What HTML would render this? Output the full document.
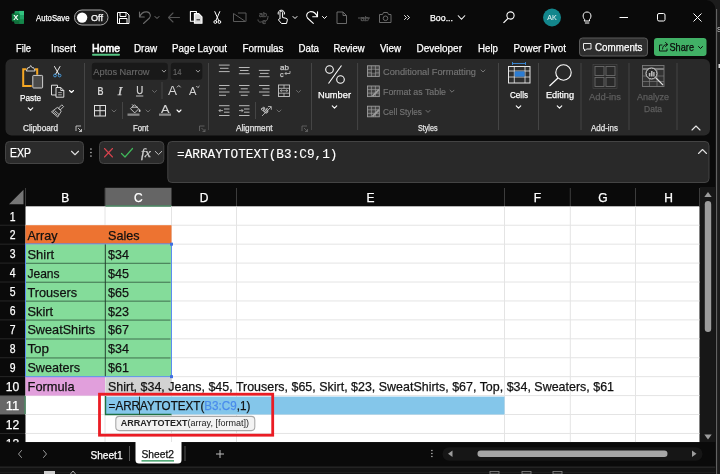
<!DOCTYPE html>
<html><head><meta charset="utf-8"><title>Excel</title>
<style>
html,body{margin:0;padding:0;background:#0a0a0a;overflow:hidden}
svg{display:block;will-change:transform;font-family:"Liberation Sans",sans-serif}
</style></head><body>
<svg width="720" height="474" viewBox="0 0 720 474">
<rect x="0" y="0" width="720" height="474" fill="#0a0a0a" />
<path d="M705 0 H720 V474 H715.3 V9 A9 9 0 0 0 706.3 0 Z" stroke="none" stroke-width="0" fill="#1c1c1c" />
<line x1="716.6" y1="9" x2="716.6" y2="474" stroke="#6a6a6a" stroke-width="1" />
<text x="717" y="31.5" font-size="7" fill="#ddd" >S</text>
<rect x="718.5" y="64" width="1.5" height="4" fill="#ddd" />
<rect x="14.5" y="10.9" width="9.5" height="12.8" fill="#1d9a5e" rx="1.2" />
<rect x="19.3" y="10.9" width="4.7" height="4.3" fill="#33c481" />
<rect x="19.3" y="15.2" width="4.7" height="4.2" fill="#21a366" />
<rect x="19.3" y="19.4" width="4.7" height="4.3" fill="#15874a" />
<rect x="14.5" y="19.4" width="4.8" height="4.3" fill="#126b3a" />
<rect x="11.8" y="13.5" width="8" height="8" fill="#107c41" rx="0.8" />
<text x="13.2" y="20.2" font-size="7.2" fill="#fff" textLength="5.2" lengthAdjust="spacingAndGlyphs" font-weight="bold" >X</text>
<text x="36" y="20.6" font-size="9" fill="#fff" stroke="#fff" stroke-width="0.25" textLength="33.5" lengthAdjust="spacingAndGlyphs" >AutoSave</text>
<rect x="74.5" y="10" width="33.5" height="15" fill="#1c1c1c" rx="7.5" stroke="#a8a8a8" stroke-width="1" />
<circle cx="82.1" cy="17.6" r="5.2" fill="#fff"/>
<text x="91" y="20.7" font-size="9" fill="#fff" stroke="#fff" stroke-width="0.25" textLength="12" lengthAdjust="spacingAndGlyphs" >Off</text>
<path d="M117.5 12.5 h9 l2.5 2.5 v8.5 h-11.5 z M120 12.5 v4 h6 v-4 M119.5 23.5 v-5 h7.5 v5" stroke="#fff" stroke-width="1" fill="none" stroke-linejoin="round"/>
<path d="M139.5 12 V17 H144.3 M139.5 17 C141 13.5 144 11.6 147 11.9 C150.3 12.3 151.2 16 149.5 18 L143.5 23.5" stroke="#6a6a6a" stroke-width="1.1" fill="none" stroke-linecap="round" stroke-linejoin="round"/>
<path d="M155.0 16.5 L157 18.5 L159.0 16.5" stroke="#7a7a7a" stroke-width="1" fill="none" stroke-linecap="round" stroke-linejoin="round"/>
<path d="M179.5 17.5 h-11 M173 13 l-4.5 4.5 l4.5 4.5" stroke="#555" stroke-width="1.1" fill="none" stroke-linecap="round" stroke-linejoin="round"/>
<path d="M194 21.3 h-3.6 v-9.8 h6 v2" stroke="#fff" stroke-width="1.1" fill="none" stroke-linejoin="round"/>
<path d="M194.4 13.6 h4.4 l3.2 3.2 v6.4 h-7.6 z" stroke="#fff" stroke-width="1.1" fill="#d8d8d8" stroke-linejoin="round"/>
<line x1="196.5" y1="19.8" x2="200" y2="19.8" stroke="#222" stroke-width="1" />
<path d="M214.8 11.6 l4 9.2 M219.8 11.6 l-4 9.2" stroke="#fff" stroke-width="1" fill="none" stroke-linecap="round"/>
<circle cx="215.3" cy="22" r="1.4" fill="none" stroke="#fff"/><circle cx="219.4" cy="22" r="1.4" fill="none" stroke="#fff"/>
<path d="M233.5 21.5 v-8 l12 8 z M238 13 h8 v8.5" stroke="#5a5a5a" stroke-width="1" fill="none" stroke-linejoin="round"/>
<text x="259" y="17" font-size="7" fill="#5a5a5a" stroke="#5a5a5a" stroke-width="0.25" textLength="8" lengthAdjust="spacingAndGlyphs" >ab</text>
<path d="M258 19.5 c0 3 3 3 4 2 M268 16 c0 5 -3 6 -5 6" stroke="#5a5a5a" stroke-width="1" fill="none" />
<text x="262" y="23.5" font-size="7" fill="#5a5a5a" stroke="#5a5a5a" stroke-width="0.25" textLength="4" lengthAdjust="spacingAndGlyphs" >c</text>
<path d="M280 19 v-6.5 a1.3 1.3 0 0 1 2.6 0 v5 l3.5 0.8 a1.5 1.5 0 0 1 1.2 1.8 l-0.8 3.4 h-5 l-3 -3.5 a1 1 0 0 1 1.5 -1 z" stroke="#fff" stroke-width="1" fill="none" stroke-linejoin="round"/>
<path d="M278.3 14.5 a3.2 3.2 0 1 1 6 0" stroke="#fff" stroke-width="1" fill="none" />
<path d="M293.0 16.5 L295 18.5 L297.0 16.5" stroke="#fff" stroke-width="1" fill="none" stroke-linecap="round" stroke-linejoin="round"/>
<path d="M317.5 11.7 V16.8 H312.7 M317.5 16.8 C316 13.5 313 11.4 310 11.7 C306.7 12.1 305.8 16 307.5 18 L313.3 23.3" stroke="#fff" stroke-width="1.1" fill="none" stroke-linecap="round" stroke-linejoin="round"/>
<path d="M322.5 16.5 L324.5 18.5 L326.5 16.5" stroke="#fff" stroke-width="1" fill="none" stroke-linecap="round" stroke-linejoin="round"/>
<path d="M337 12 h6 l3.5 3.5 v8 h-9.5 z M343 12 v3.5 h3.5" stroke="#6a6a6a" stroke-width="1" fill="none" stroke-linejoin="round"/>
<text x="360.5" y="20.5" font-size="8" fill="#5a5a5a" stroke="#5a5a5a" stroke-width="0.25" textLength="8.5" lengthAdjust="spacingAndGlyphs" >ab</text>
<line x1="358" y1="18" x2="370" y2="18" stroke="#5a5a5a" stroke-width="1" />
<path d="M379.5 14.5 h3 l1 -2 h4 l1 2 h2.5 v8 h-11.5 z" stroke="#6a6a6a" stroke-width="1" fill="none" stroke-linejoin="round"/>
<circle cx="385.5" cy="18.3" r="2.3" fill="none" stroke="#6a6a6a"/>
<path d="M404.5 15.5 l2 2 l-2 2 M407.5 15.5 l2 2 l-2 2" stroke="#fff" stroke-width="0.9" fill="none" stroke-linecap="round" stroke-linejoin="round"/>
<text x="430" y="20.8" font-size="9" fill="#fff" stroke="#fff" stroke-width="0.25" textLength="23" lengthAdjust="spacingAndGlyphs" >Boo...</text>
<path d="M458.25 15.75 L461.5 19.25 L464.75 15.75" stroke="#fff" stroke-width="1.1" fill="none" stroke-linecap="round" stroke-linejoin="round"/>
<circle cx="510.5" cy="15.5" r="3.6" fill="none" stroke="#fff" stroke-width="1.1"/>
<line x1="508" y1="18.3" x2="503.5" y2="22.8" stroke="#fff" stroke-width="1.2" />
<circle cx="552" cy="17.5" r="9" fill="#13868c"/>
<text x="547.3" y="20.2" font-size="7.6" fill="#e4f2f2" stroke="#e4f2f2" stroke-width="0.05" textLength="9.5" lengthAdjust="spacingAndGlyphs" >AK</text>
<path d="M584.5 19.5 c-2.5 -2.5 -1.8 -7.5 2.5 -7.5 c4.3 0 5 5 2.5 7.5 v1.5 h-5 z M585.3 23 h3.6" stroke="#fff" stroke-width="1" fill="none" stroke-linejoin="round" stroke-linecap="round"/>
<line x1="619.5" y1="17.5" x2="628" y2="17.5" stroke="#fff" stroke-width="1" />
<rect x="657.5" y="13.5" width="7.5" height="7.5" fill="none" rx="1.5" stroke="#fff" stroke-width="1" />
<path d="M693.5 13.5 l8 8 M701.5 13.5 l-8 8" stroke="#fff" stroke-width="1" fill="none" />
<text x="16" y="51.6" font-size="10.1" fill="#fff" stroke="#fff" stroke-width="0.25" textLength="15" lengthAdjust="spacingAndGlyphs" >File</text>
<text x="51" y="51.6" font-size="10.1" fill="#fff" stroke="#fff" stroke-width="0.25" textLength="25" lengthAdjust="spacingAndGlyphs" >Insert</text>
<text x="134" y="51.6" font-size="10.1" fill="#fff" stroke="#fff" stroke-width="0.25" textLength="23" lengthAdjust="spacingAndGlyphs" >Draw</text>
<text x="172" y="51.6" font-size="10.1" fill="#fff" stroke="#fff" stroke-width="0.25" textLength="55" lengthAdjust="spacingAndGlyphs" >Page Layout</text>
<text x="242.5" y="51.6" font-size="10.1" fill="#fff" stroke="#fff" stroke-width="0.25" textLength="41.0" lengthAdjust="spacingAndGlyphs" >Formulas</text>
<text x="298.5" y="51.6" font-size="10.1" fill="#fff" stroke="#fff" stroke-width="0.25" textLength="20.5" lengthAdjust="spacingAndGlyphs" >Data</text>
<text x="333.5" y="51.6" font-size="10.1" fill="#fff" stroke="#fff" stroke-width="0.25" textLength="31.0" lengthAdjust="spacingAndGlyphs" >Review</text>
<text x="380" y="51.6" font-size="10.1" fill="#fff" stroke="#fff" stroke-width="0.25" textLength="21" lengthAdjust="spacingAndGlyphs" >View</text>
<text x="416.5" y="51.6" font-size="10.1" fill="#fff" stroke="#fff" stroke-width="0.25" textLength="45.5" lengthAdjust="spacingAndGlyphs" >Developer</text>
<text x="478" y="51.6" font-size="10.1" fill="#fff" stroke="#fff" stroke-width="0.25" textLength="20" lengthAdjust="spacingAndGlyphs" >Help</text>
<text x="513.5" y="51.6" font-size="10.1" fill="#fff" stroke="#fff" stroke-width="0.25" textLength="52.5" lengthAdjust="spacingAndGlyphs" >Power Pivot</text>
<text x="92" y="51.6" font-size="10.1" fill="#fff" stroke="#fff" stroke-width="0.55" textLength="28" lengthAdjust="spacingAndGlyphs" >Home</text>
<rect x="92" y="53.8" width="28" height="1.9" fill="#55c483" rx="0.9" />
<rect x="579.5" y="38" width="68" height="18" fill="#2e2e2e" rx="3" stroke="#5a5a5a" stroke-width="1" />
<path d="M583.5 43.5 h7.5 v5.5 h-4.5 l-2 2 v-2 h-1 z" stroke="#fff" stroke-width="0.9" fill="none" stroke-linejoin="round"/>
<text x="595" y="51.1" font-size="10.1" fill="#fff" stroke="#fff" stroke-width="0.25" textLength="47.5" lengthAdjust="spacingAndGlyphs" >Comments</text>
<rect x="654" y="38" width="52.5" height="18" fill="#41b166" rx="3" />
<path d="M662 45 h-2.5 v6 h7.5 v-2 M662.5 49 c0 -3 2 -4.5 4.5 -4.5 M665.5 42.5 l2.3 2 l-2.3 2" stroke="#0a0a0a" stroke-width="0.9" fill="none" stroke-linejoin="round" stroke-linecap="round"/>
<text x="669.5" y="51.1" font-size="10.1" fill="#0a0a0a" stroke="#0a0a0a" stroke-width="0.25" textLength="24.5" lengthAdjust="spacingAndGlyphs" >Share</text>
<path d="M698.5 46.5 L700.5 48.5 L702.5 46.5" stroke="#0a0a0a" stroke-width="1" fill="none" stroke-linecap="round" stroke-linejoin="round"/>
<rect x="5.5" y="59" width="704.5" height="76.5" fill="#292929" rx="6" />
<line x1="84.5" y1="63" x2="84.5" y2="130" stroke="#454545" stroke-width="1" />
<line x1="208.5" y1="63" x2="208.5" y2="130" stroke="#454545" stroke-width="1" />
<line x1="311.5" y1="63" x2="311.5" y2="130" stroke="#454545" stroke-width="1" />
<line x1="357.6" y1="63" x2="357.6" y2="130" stroke="#454545" stroke-width="1" />
<line x1="498.5" y1="63" x2="498.5" y2="130" stroke="#454545" stroke-width="1" />
<line x1="538.5" y1="63" x2="538.5" y2="130" stroke="#454545" stroke-width="1" />
<line x1="581" y1="63" x2="581" y2="130" stroke="#454545" stroke-width="1" />
<line x1="629" y1="63" x2="629" y2="130" stroke="#454545" stroke-width="1" />
<line x1="677" y1="63" x2="677" y2="130" stroke="#454545" stroke-width="1" />
<text x="23" y="130.5" font-size="8.7" fill="#e6e6e6" stroke="#e6e6e6" stroke-width="0.25" textLength="35" lengthAdjust="spacingAndGlyphs" >Clipboard</text>
<text x="133" y="130.5" font-size="8.7" fill="#e6e6e6" stroke="#e6e6e6" stroke-width="0.25" textLength="15.5" lengthAdjust="spacingAndGlyphs" >Font</text>
<text x="236" y="130.5" font-size="8.7" fill="#e6e6e6" stroke="#e6e6e6" stroke-width="0.25" textLength="36.5" lengthAdjust="spacingAndGlyphs" >Alignment</text>
<text x="418" y="130.5" font-size="8.7" fill="#e6e6e6" stroke="#e6e6e6" stroke-width="0.25" textLength="19.5" lengthAdjust="spacingAndGlyphs" >Styles</text>
<text x="591" y="130.5" font-size="8.7" fill="#e6e6e6" stroke="#e6e6e6" stroke-width="0.25" textLength="27" lengthAdjust="spacingAndGlyphs" >Add-ins</text>
<path d="M76 131 v-5 h5 M78 128 l3.5 3.5 M81.5 129 v2.5 h-2.5" stroke="#e0e0e0" stroke-width="0.8" fill="none" />
<path d="M199.5 131 v-5 h5 M201.5 128 l3.5 3.5 M205.0 129 v2.5 h-2.5" stroke="#6a6a6a" stroke-width="0.8" fill="none" />
<path d="M302 131 v-5 h5 M304 128 l3.5 3.5 M307.5 129 v2.5 h-2.5" stroke="#6a6a6a" stroke-width="0.8" fill="none" />
<path d="M692 130 l4 -4 l4 4" stroke="#e6e6e6" stroke-width="1.1" fill="none" stroke-linecap="round" stroke-linejoin="round"/>
<path d="M26.5 69.2 h-3.3 v16.8 h8.5 M35 69.2 h2.2 v5.5" stroke="#f5a724" stroke-width="2" fill="none" stroke-linejoin="miter"/>
<path d="M26.3 71 l1.5 -3.3 h1.5 l1.4 -2.2 l1.4 2.2 h1.5 l1.5 3.3 z" stroke="#e0e0e0" stroke-width="0.9" fill="#292929" stroke-linejoin="round"/>
<rect x="32.8" y="75.4" width="9.8" height="12.6" fill="#4a4a4a" rx="0.8" stroke="#d0d0d0" stroke-width="1" />
<text x="20" y="100.5" font-size="9.6" fill="#fff" stroke="#fff" stroke-width="0.25" textLength="21" lengthAdjust="spacingAndGlyphs" >Paste</text>
<path d="M28.25 107.9 L30.5 110.1 L32.75 107.9" stroke="#fff" stroke-width="1.1" fill="none" stroke-linecap="round" stroke-linejoin="round"/>
<path d="M54.5 66.5 l4.5 8 M60 66.5 l-4.5 8" stroke="#fff" stroke-width="0.9" fill="none" stroke-linecap="round"/>
<circle cx="55" cy="75.5" r="1.4" fill="none" stroke="#4aa3e8" stroke-width="0.9"/><circle cx="59.6" cy="75.5" r="1.4" fill="none" stroke="#4aa3e8" stroke-width="0.9"/>
<path d="M56 95 h-4.5 v-9.8 h6 v2 M56 87.5 h4.8 l3 3 v6.7 h-7.8 z M60.8 87.5 v3 h3" stroke="#f0f0f0" stroke-width="0.9" fill="none" stroke-linejoin="round"/>
<line x1="58.2" y1="92.6" x2="61.8" y2="92.6" stroke="#ddd" stroke-width="0.7" />
<line x1="58.2" y1="94.8" x2="61.8" y2="94.8" stroke="#ddd" stroke-width="0.7" />
<path d="M69.5 90.5 L71.5 92.5 L73.5 90.5" stroke="#fff" stroke-width="1.1" fill="none" stroke-linecap="round" stroke-linejoin="round"/>
<path d="M61.8 104.8 l1.8 1.8 l-3.3 3.3 l-1.8 -1.8 z M57.5 107.3 l3.8 3.8 l-3.6 6 l-6.2 -5.3 z M54.5 110.5 l4.5 4 M53 111.3 l4.5 4.2" stroke="#e0e0e0" stroke-width="0.8" fill="none" stroke-linejoin="round"/>
<rect x="91.8" y="62.7" width="76" height="17" fill="#191919" rx="3" />
<text x="93.3" y="74.8" font-size="9.8" fill="#686868" stroke="#686868" stroke-width="0.15" textLength="56.2" lengthAdjust="spacingAndGlyphs" >Aptos Narrow</text>
<path d="M162.2 70.25 L164 72.15 L165.8 70.25" stroke="#9a9a9a" stroke-width="1" fill="none" stroke-linecap="round" stroke-linejoin="round"/>
<rect x="170.8" y="62.7" width="31.5" height="17" fill="#191919" rx="3" />
<text x="173" y="74.8" font-size="9.8" fill="#686868" stroke="#686868" stroke-width="0.15" textLength="8.5" lengthAdjust="spacingAndGlyphs" >14</text>
<path d="M196.2 70.25 L198 72.15 L199.8 70.25" stroke="#9a9a9a" stroke-width="1" fill="none" stroke-linecap="round" stroke-linejoin="round"/>
<text x="97.6" y="94.5" font-size="11" fill="#d4d4d4" textLength="6" lengthAdjust="spacingAndGlyphs" font-weight="bold" >B</text>
<text x="117.8" y="94.5" font-size="11.5" fill="#d4d4d4" stroke="#d4d4d4" stroke-width="0.25" textLength="4.6" lengthAdjust="spacingAndGlyphs" font-family='"Liberation Serif", serif' font-style="italic" >I</text>
<text x="136.2" y="94.2" font-size="10.6" fill="#d4d4d4" stroke="#d4d4d4" stroke-width="0.25" textLength="7" lengthAdjust="spacingAndGlyphs" >U</text>
<line x1="136" y1="96" x2="143.3" y2="96" stroke="#d4d4d4" stroke-width="0.9" />
<path d="M152.5 90.5 L154.5 92.5 L156.5 90.5" stroke="#6a6a6a" stroke-width="1" fill="none" stroke-linecap="round" stroke-linejoin="round"/>
<line x1="162" y1="82" x2="162" y2="99" stroke="#454545" stroke-width="1" />
<text x="168" y="95" font-size="13" fill="#d4d4d4" textLength="9" lengthAdjust="spacingAndGlyphs" >A</text>
<path d="M177 87.3 l1.8 -1.8 l1.8 1.8" stroke="#d4d4d4" stroke-width="0.9" fill="none" />
<text x="189" y="95" font-size="11" fill="#d4d4d4" textLength="7.5" lengthAdjust="spacingAndGlyphs" >A</text>
<path d="M196.3 86 l1.6 1.6 l1.6 -1.6" stroke="#d4d4d4" stroke-width="0.9" fill="none" />
<rect x="94.5" y="105.5" width="11" height="10.5" fill="none" stroke="#e0e0e0" stroke-width="1" />
<line x1="100" y1="105.5" x2="100" y2="116" stroke="#e0e0e0" stroke-width="1" />
<line x1="94.5" y1="110.7" x2="105.5" y2="110.7" stroke="#e0e0e0" stroke-width="1" />
<path d="M112.0 110.0 L114 112.0 L116.0 110.0" stroke="#6a6a6a" stroke-width="1" fill="none" stroke-linecap="round" stroke-linejoin="round"/>
<line x1="122.5" y1="102" x2="122.5" y2="119" stroke="#454545" stroke-width="1" />
<path d="M130.5 108.7 l4 -4 l4.2 4.2 l-4 4 z M132 107.2 h6 M133.3 105.8 l-1.2 -1.4" stroke="#d4d4d4" stroke-width="0.9" fill="none" stroke-linejoin="round"/>
<path d="M139.6 108.8 c1 1.6 1.3 2.3 0.6 3 c-0.7 0.5 -1.6 0 -1.5 -1 z" stroke="#d4d4d4" stroke-width="0" fill="#d4d4d4" />
<rect x="127.5" y="113.5" width="12" height="2.3" fill="#8a8a8a" />
<path d="M146.0 110.0 L148 112.0 L150.0 110.0" stroke="#6a6a6a" stroke-width="1" fill="none" stroke-linecap="round" stroke-linejoin="round"/>
<text x="161" y="113.2" font-size="10.8" fill="#d4d4d4" stroke="#d4d4d4" stroke-width="0.1" textLength="8.5" lengthAdjust="spacingAndGlyphs" >A</text>
<rect x="159" y="113.5" width="12" height="2.3" fill="#8a8a8a" />
<path d="M177.0 110.0 L179 112.0 L181.0 110.0" stroke="#fff" stroke-width="1.1" fill="none" stroke-linecap="round" stroke-linejoin="round"/>
<line x1="218.85" y1="65.1" x2="229.65" y2="65.1" stroke="#c8c8c8" stroke-width="0.9" />
<line x1="219.95" y1="68.3" x2="228.54999999999998" y2="68.3" stroke="#c8c8c8" stroke-width="0.9" />
<line x1="218.85" y1="71.6" x2="229.65" y2="71.6" stroke="#c8c8c8" stroke-width="0.9" />
<line x1="238.85" y1="67.5" x2="249.65" y2="67.5" stroke="#c8c8c8" stroke-width="0.9" />
<line x1="239.95" y1="70.5" x2="248.54999999999998" y2="70.5" stroke="#c8c8c8" stroke-width="0.9" />
<line x1="238.85" y1="73.7" x2="249.65" y2="73.7" stroke="#c8c8c8" stroke-width="0.9" />
<line x1="258.85" y1="70.4" x2="269.65000000000003" y2="70.4" stroke="#c8c8c8" stroke-width="0.9" />
<line x1="259.95" y1="73.4" x2="268.55" y2="73.4" stroke="#c8c8c8" stroke-width="0.9" />
<line x1="258.85" y1="76.7" x2="269.65000000000003" y2="76.7" stroke="#c8c8c8" stroke-width="0.9" />
<text x="280" y="69.5" font-size="7" fill="#c8c8c8" stroke="#c8c8c8" stroke-width="0.25" textLength="9" lengthAdjust="spacingAndGlyphs" >ab</text>
<text x="280" y="76.5" font-size="7" fill="#c8c8c8" stroke="#c8c8c8" stroke-width="0.25" textLength="3.6" lengthAdjust="spacingAndGlyphs" >c</text>
<path d="M290 71 v2.5 h-5 M286.5 72 l-1.5 1.5 l1.5 1.5" stroke="#c8c8c8" stroke-width="0.8" fill="none" />
<line x1="219" y1="85.5" x2="229.5" y2="85.5" stroke="#c8c8c8" stroke-width="0.9" />
<line x1="219" y1="88.8" x2="226" y2="88.8" stroke="#c8c8c8" stroke-width="0.9" />
<line x1="219" y1="92" x2="229.5" y2="92" stroke="#c8c8c8" stroke-width="0.9" />
<line x1="219" y1="95.3" x2="226" y2="95.3" stroke="#c8c8c8" stroke-width="0.9" />
<line x1="239.0" y1="85.5" x2="249.5" y2="85.5" stroke="#c8c8c8" stroke-width="0.9" />
<line x1="240.75" y1="88.8" x2="247.75" y2="88.8" stroke="#c8c8c8" stroke-width="0.9" />
<line x1="239.0" y1="92" x2="249.5" y2="92" stroke="#c8c8c8" stroke-width="0.9" />
<line x1="240.75" y1="95.3" x2="247.75" y2="95.3" stroke="#c8c8c8" stroke-width="0.9" />
<line x1="259.0" y1="85.5" x2="269.5" y2="85.5" stroke="#c8c8c8" stroke-width="0.9" />
<line x1="262.5" y1="88.8" x2="269.5" y2="88.8" stroke="#c8c8c8" stroke-width="0.9" />
<line x1="259.0" y1="92" x2="269.5" y2="92" stroke="#c8c8c8" stroke-width="0.9" />
<line x1="262.5" y1="95.3" x2="269.5" y2="95.3" stroke="#c8c8c8" stroke-width="0.9" />
<rect x="278.5" y="85" width="11" height="11.5" fill="none" stroke="#c8c8c8" stroke-width="0.9" />
<line x1="278.5" y1="88.3" x2="289.5" y2="88.3" stroke="#c8c8c8" stroke-width="0.8" />
<line x1="278.5" y1="93.2" x2="289.5" y2="93.2" stroke="#c8c8c8" stroke-width="0.8" />
<line x1="284" y1="85" x2="284" y2="88.3" stroke="#c8c8c8" stroke-width="0.8" />
<line x1="284" y1="93.2" x2="284" y2="96.5" stroke="#c8c8c8" stroke-width="0.8" />
<path d="M280.3 90.7 h7.4 M281.8 89.5 l-1.5 1.2 l1.5 1.2 M286.2 89.5 l1.5 1.2 l-1.5 1.2" stroke="#c8c8c8" stroke-width="0.7" fill="none" />
<path d="M296.5 90.5 L298.5 92.5 L300.5 90.5" stroke="#6a6a6a" stroke-width="1" fill="none" stroke-linecap="round" stroke-linejoin="round"/>
<line x1="219.0" y1="105.7" x2="229.5" y2="105.7" stroke="#c8c8c8" stroke-width="0.9" />
<line x1="224.0" y1="109" x2="229.5" y2="109" stroke="#c8c8c8" stroke-width="0.9" />
<line x1="224.0" y1="112.2" x2="229.5" y2="112.2" stroke="#c8c8c8" stroke-width="0.9" />
<line x1="219.0" y1="115.5" x2="229.5" y2="115.5" stroke="#c8c8c8" stroke-width="0.9" />
<path d="M223 110.6 h-4 M220.5 109.1 l-1.5 1.5 l1.5 1.5" stroke="#c8c8c8" stroke-width="0.8" fill="none" />
<line x1="239.0" y1="105.7" x2="249.5" y2="105.7" stroke="#c8c8c8" stroke-width="0.9" />
<line x1="244.0" y1="109" x2="249.5" y2="109" stroke="#c8c8c8" stroke-width="0.9" />
<line x1="244.0" y1="112.2" x2="249.5" y2="112.2" stroke="#c8c8c8" stroke-width="0.9" />
<line x1="239.0" y1="115.5" x2="249.5" y2="115.5" stroke="#c8c8c8" stroke-width="0.9" />
<path d="M239 110.6 h4 M241.5 109.1 l1.5 1.5 l-1.5 1.5" stroke="#c8c8c8" stroke-width="0.8" fill="none" />
<line x1="255.5" y1="102" x2="255.5" y2="119" stroke="#454545" stroke-width="1" />
<text x="0" y="0" font-size="7" fill="#c8c8c8" stroke="#c8c8c8" stroke-width="0.25" textLength="8" lengthAdjust="spacingAndGlyphs" transform="translate(260.5,109) rotate(40)">ab</text>
<path d="M262 116 l9 -9 M268 106.5 h3.3 v3.3" stroke="#c8c8c8" stroke-width="0.8" fill="none" />
<path d="M277.0 110.0 L279 112.0 L281.0 110.0" stroke="#6a6a6a" stroke-width="1" fill="none" stroke-linecap="round" stroke-linejoin="round"/>
<circle cx="329.5" cy="69.5" r="3.8" fill="none" stroke="#fff" stroke-width="1.1"/><circle cx="340.5" cy="79.5" r="3.8" fill="none" stroke="#fff" stroke-width="1.1"/>
<line x1="341.5" y1="65.5" x2="328.5" y2="83.5" stroke="#fff" stroke-width="1.1" />
<text x="318" y="98" font-size="9.6" fill="#fff" stroke="#fff" stroke-width="0.25" textLength="33" lengthAdjust="spacingAndGlyphs" >Number</text>
<path d="M332.25 105.9 L334.5 108.1 L336.75 105.9" stroke="#fff" stroke-width="1.1" fill="none" stroke-linecap="round" stroke-linejoin="round"/>
<rect x="367.5" y="65.8" width="11.8" height="10.6" fill="#444" stroke="#9c9c9c" stroke-width="0.9" />
<line x1="367.5" y1="69.4" x2="379.3" y2="69.4" stroke="#9c9c9c" stroke-width="0.7" />
<line x1="367.5" y1="72.9" x2="379.3" y2="72.9" stroke="#9c9c9c" stroke-width="0.7" />
<line x1="371.4" y1="65.8" x2="371.4" y2="76.4" stroke="#9c9c9c" stroke-width="0.7" />
<line x1="375.4" y1="65.8" x2="375.4" y2="76.4" stroke="#9c9c9c" stroke-width="0.7" />
<rect x="371.8" y="69.7" width="3.3" height="3" fill="#2a2a2a" />
<text x="383" y="74.7" font-size="9.6" fill="#757575" stroke="#757575" stroke-width="0.15" textLength="93" lengthAdjust="spacingAndGlyphs" >Conditional Formatting</text>
<path d="M481.0 70.0 L483 72.0 L485.0 70.0" stroke="#757575" stroke-width="1" fill="none" stroke-linecap="round" stroke-linejoin="round"/>
<rect x="367.5" y="86.0" width="11.8" height="10.6" fill="#444" stroke="#9c9c9c" stroke-width="0.9" />
<line x1="367.5" y1="89.60000000000001" x2="379.3" y2="89.60000000000001" stroke="#9c9c9c" stroke-width="0.7" />
<line x1="367.5" y1="93.10000000000001" x2="379.3" y2="93.10000000000001" stroke="#9c9c9c" stroke-width="0.7" />
<line x1="371.4" y1="86.0" x2="371.4" y2="96.60000000000001" stroke="#9c9c9c" stroke-width="0.7" />
<line x1="375.4" y1="86.0" x2="375.4" y2="96.60000000000001" stroke="#9c9c9c" stroke-width="0.7" />
<path d="M372.5 96.2 l6.5 -6.5" stroke="#9c9c9c" stroke-width="1.8" fill="none" />
<text x="383" y="94.9" font-size="9.6" fill="#757575" stroke="#757575" stroke-width="0.15" textLength="63" lengthAdjust="spacingAndGlyphs" >Format as Table</text>
<path d="M450.0 90.2 L452 92.2 L454.0 90.2" stroke="#757575" stroke-width="1" fill="none" stroke-linecap="round" stroke-linejoin="round"/>
<rect x="367.5" y="106.2" width="11.8" height="10.6" fill="#444" stroke="#9c9c9c" stroke-width="0.9" />
<line x1="367.5" y1="109.80000000000001" x2="379.3" y2="109.80000000000001" stroke="#9c9c9c" stroke-width="0.7" />
<line x1="367.5" y1="113.30000000000001" x2="379.3" y2="113.30000000000001" stroke="#9c9c9c" stroke-width="0.7" />
<line x1="371.4" y1="106.2" x2="371.4" y2="116.80000000000001" stroke="#9c9c9c" stroke-width="0.7" />
<line x1="375.4" y1="106.2" x2="375.4" y2="116.80000000000001" stroke="#9c9c9c" stroke-width="0.7" />
<path d="M372.5 116.4 l6.5 -6.5" stroke="#9c9c9c" stroke-width="1.8" fill="none" />
<text x="383" y="115.10000000000001" font-size="9.6" fill="#757575" stroke="#757575" stroke-width="0.15" textLength="39" lengthAdjust="spacingAndGlyphs" >Cell Styles</text>
<path d="M426.0 110.4 L428 112.4 L430.0 110.4" stroke="#757575" stroke-width="1" fill="none" stroke-linecap="round" stroke-linejoin="round"/>
<path d="M512.5 62 v3 M525.5 62 v3 M512.5 63.5 h13" stroke="#3b8de0" stroke-width="0.9" fill="none" />
<rect x="508.5" y="66.5" width="21.5" height="16.5" fill="#2f2f2f" stroke="#e6e6e6" stroke-width="1" />
<line x1="508.5" y1="71" x2="530" y2="71" stroke="#e6e6e6" stroke-width="0.8" />
<line x1="508.5" y1="77" x2="530" y2="77" stroke="#e6e6e6" stroke-width="0.8" />
<line x1="514.3" y1="66.5" x2="514.3" y2="83" stroke="#e6e6e6" stroke-width="0.8" />
<line x1="525" y1="66.5" x2="525" y2="83" stroke="#e6e6e6" stroke-width="0.8" />
<rect x="514.7" y="71.4" width="9.9" height="5.2" fill="#2b7cd3" />
<text x="510" y="98" font-size="9.6" fill="#fff" stroke="#fff" stroke-width="0.25" textLength="18" lengthAdjust="spacingAndGlyphs" >Cells</text>
<path d="M516.25 105.9 L518.5 108.1 L520.75 105.9" stroke="#fff" stroke-width="1.1" fill="none" stroke-linecap="round" stroke-linejoin="round"/>
<circle cx="563.5" cy="72.5" r="7.7" fill="none" stroke="#fff" stroke-width="1.1"/>
<line x1="558" y1="78" x2="549.5" y2="86" stroke="#fff" stroke-width="1.2" />
<text x="546" y="98" font-size="9.6" fill="#fff" stroke="#fff" stroke-width="0.25" textLength="28" lengthAdjust="spacingAndGlyphs" >Editing</text>
<path d="M557.25 105.9 L559.5 108.1 L561.75 105.9" stroke="#fff" stroke-width="1.1" fill="none" stroke-linecap="round" stroke-linejoin="round"/>
<rect x="595" y="66.5" width="9" height="9" fill="none" stroke="#6c6c6c" stroke-width="0.9" />
<rect x="606" y="66.5" width="9" height="9" fill="none" stroke="#6c6c6c" stroke-width="0.9" />
<rect x="595" y="77.5" width="9" height="9" fill="none" stroke="#6c6c6c" stroke-width="0.9" />
<rect x="606" y="77.5" width="9" height="9" fill="none" stroke="#6c6c6c" stroke-width="0.9" />
<rect x="593" y="64.5" width="24" height="24" fill="none" stroke="#4a4a4a" stroke-width="0.6" />
<text x="589" y="100" font-size="9.6" fill="#5e5e5e" stroke="#5e5e5e" stroke-width="0.25" textLength="32" lengthAdjust="spacingAndGlyphs" >Add-ins</text>
<rect x="642.5" y="65.5" width="21.5" height="21" fill="#333" stroke="#7a7a7a" stroke-width="0.9" />
<line x1="642.5" y1="69" x2="664" y2="69" stroke="#7a7a7a" stroke-width="2" />
<line x1="642.5" y1="76" x2="664" y2="76" stroke="#7a7a7a" stroke-width="0.7" />
<line x1="642.5" y1="81.5" x2="664" y2="81.5" stroke="#7a7a7a" stroke-width="0.7" />
<line x1="649.5" y1="69" x2="649.5" y2="86.5" stroke="#7a7a7a" stroke-width="0.7" />
<line x1="657" y1="69" x2="657" y2="86.5" stroke="#7a7a7a" stroke-width="0.7" />
<circle cx="651.5" cy="73.5" r="5.5" fill="#2a2a2a" stroke="#e0e0e0" stroke-width="1"/>
<line x1="655.5" y1="77.5" x2="663" y2="85" stroke="#e0e0e0" stroke-width="1.1" />
<rect x="648.8" y="73" width="1.6" height="3.5" fill="#bbb" />
<rect x="651" y="71" width="1.6" height="5.5" fill="#bbb" />
<rect x="653.2" y="72" width="1.4" height="4.5" fill="#bbb" />
<text x="637" y="100" font-size="9.6" fill="#5e5e5e" stroke="#5e5e5e" stroke-width="0.25" textLength="32" lengthAdjust="spacingAndGlyphs" >Analyze</text>
<text x="644" y="112" font-size="9.6" fill="#5e5e5e" stroke="#5e5e5e" stroke-width="0.25" textLength="18" lengthAdjust="spacingAndGlyphs" >Data</text>
<rect x="5.5" y="141.5" width="78" height="22" fill="#2b2b2b" rx="4" stroke="#444" stroke-width="1" />
<text x="10" y="157" font-size="12.5" fill="#fff" stroke="#fff" stroke-width="0.25" textLength="21" lengthAdjust="spacingAndGlyphs" >EXP</text>
<path d="M71.5 151.25 L75 154.75 L78.5 151.25" stroke="#e0e0e0" stroke-width="1.1" fill="none" stroke-linecap="round" stroke-linejoin="round"/>
<rect x="90.3" y="148.4" width="1.3" height="1.3" fill="#d0d0d0" />
<rect x="90.3" y="151.9" width="1.3" height="1.3" fill="#d0d0d0" />
<rect x="90.3" y="155.4" width="1.3" height="1.3" fill="#d0d0d0" />
<rect x="99.5" y="141.5" width="64.3" height="22" fill="#2b2b2b" rx="4" stroke="#444" stroke-width="1" />
<path d="M104.5 148.5 l8 8.5 M112.5 148.5 l-8 8.5" stroke="#d8434e" stroke-width="1.1" fill="none" stroke-linecap="round"/>
<path d="M121.5 153.5 l3.5 3.5 l7.5 -8.5" stroke="#40b85a" stroke-width="1.2" fill="none" stroke-linecap="round" stroke-linejoin="round"/>
<text x="141" y="157" font-size="12.5" fill="#d0d0d0" stroke="#d0d0d0" stroke-width="0.25" textLength="10" lengthAdjust="spacingAndGlyphs" font-family='"Liberation Serif", serif' font-style="italic" >fx</text>
<path d="M155.25 151.4 L158.5 154.6 L161.75 151.4" stroke="#c0c0c0" stroke-width="1" fill="none" stroke-linecap="round" stroke-linejoin="round"/>
<rect x="167.8" y="141.5" width="541.2" height="41" fill="#292929" rx="4" stroke="#444" stroke-width="1" />
<text x="177" y="158" font-size="13" fill="#fff" stroke="#fff" stroke-width="0.1" textLength="160.5" lengthAdjust="spacingAndGlyphs" font-family='"Liberation Mono", monospace' >=ARRAYTOTEXT(B3:C9,1)</text>
<path d="M698.5 153.5 l4 -4 l4 4" stroke="#e0e0e0" stroke-width="1.1" fill="none" stroke-linecap="round" stroke-linejoin="round"/>
<rect x="25.5" y="206.3" width="674.0" height="235.89999999999998" fill="#fff" />
<rect x="105" y="187.8" width="66.5" height="18.50000000000001" fill="#656565" />
<line x1="105" y1="206.0" x2="171.5" y2="206.0" stroke="#3f9a62" stroke-width="1" />
<path d="M9 204.3 L23.5 204.3 L23.5 189.8 z" stroke="#777" stroke-width="0" fill="#777" />
<text x="65.25" y="201.8" font-size="12" fill="#fff" stroke="#fff" stroke-width="0.25" text-anchor="middle" >B</text>
<line x1="105" y1="188" x2="105" y2="206.3" stroke="#3c3c3c" stroke-width="1" />
<text x="138.25" y="201.8" font-size="12" fill="#fff" stroke="#fff" stroke-width="0.25" text-anchor="middle" >C</text>
<text x="204.0" y="201.8" font-size="12" fill="#fff" stroke="#fff" stroke-width="0.25" text-anchor="middle" >D</text>
<line x1="236.5" y1="188" x2="236.5" y2="206.3" stroke="#3c3c3c" stroke-width="1" />
<text x="370.5" y="201.8" font-size="12" fill="#fff" stroke="#fff" stroke-width="0.25" text-anchor="middle" >E</text>
<line x1="504.5" y1="188" x2="504.5" y2="206.3" stroke="#3c3c3c" stroke-width="1" />
<text x="537.4" y="201.8" font-size="12" fill="#fff" stroke="#fff" stroke-width="0.25" text-anchor="middle" >F</text>
<line x1="570.3" y1="188" x2="570.3" y2="206.3" stroke="#3c3c3c" stroke-width="1" />
<text x="602.9" y="201.8" font-size="12" fill="#fff" stroke="#fff" stroke-width="0.25" text-anchor="middle" >G</text>
<line x1="635.5" y1="188" x2="635.5" y2="206.3" stroke="#3c3c3c" stroke-width="1" />
<text x="668.7" y="201.8" font-size="12" fill="#fff" stroke="#fff" stroke-width="0.25" text-anchor="middle" >H</text>
<line x1="699.5" y1="188" x2="699.5" y2="206.3" stroke="#3c3c3c" stroke-width="1" />
<line x1="25.5" y1="188" x2="25.5" y2="206.3" stroke="#3c3c3c" stroke-width="1" />
<rect x="0" y="395.20000000000005" width="25" height="19.6" fill="#676767" />
<line x1="25" y1="395.20000000000005" x2="25" y2="414.83" stroke="#3f9a62" stroke-width="1" />
<text x="9.7" y="220.5" font-size="13" fill="#fff" stroke="#fff" stroke-width="0.25" textLength="5.8" lengthAdjust="spacingAndGlyphs" >1</text>
<text x="9.7" y="239.43" font-size="13" fill="#fff" stroke="#fff" stroke-width="0.25" textLength="5.8" lengthAdjust="spacingAndGlyphs" >2</text>
<line x1="0" y1="225.23000000000002" x2="25" y2="225.23000000000002" stroke="#2e2e2e" stroke-width="0.8" />
<text x="9.7" y="258.36" font-size="13" fill="#fff" stroke="#fff" stroke-width="0.25" textLength="5.8" lengthAdjust="spacingAndGlyphs" >3</text>
<line x1="0" y1="244.16000000000003" x2="25" y2="244.16000000000003" stroke="#2e2e2e" stroke-width="0.8" />
<text x="9.7" y="277.29" font-size="13" fill="#fff" stroke="#fff" stroke-width="0.25" textLength="5.8" lengthAdjust="spacingAndGlyphs" >4</text>
<line x1="0" y1="263.09000000000003" x2="25" y2="263.09000000000003" stroke="#2e2e2e" stroke-width="0.8" />
<text x="9.7" y="296.21999999999997" font-size="13" fill="#fff" stroke="#fff" stroke-width="0.25" textLength="5.8" lengthAdjust="spacingAndGlyphs" >5</text>
<line x1="0" y1="282.02" x2="25" y2="282.02" stroke="#2e2e2e" stroke-width="0.8" />
<text x="9.7" y="315.15000000000003" font-size="13" fill="#fff" stroke="#fff" stroke-width="0.25" textLength="5.8" lengthAdjust="spacingAndGlyphs" >6</text>
<line x1="0" y1="300.95000000000005" x2="25" y2="300.95000000000005" stroke="#2e2e2e" stroke-width="0.8" />
<text x="9.7" y="334.08" font-size="13" fill="#fff" stroke="#fff" stroke-width="0.25" textLength="5.8" lengthAdjust="spacingAndGlyphs" >7</text>
<line x1="0" y1="319.88" x2="25" y2="319.88" stroke="#2e2e2e" stroke-width="0.8" />
<text x="9.7" y="353.01" font-size="13" fill="#fff" stroke="#fff" stroke-width="0.25" textLength="5.8" lengthAdjust="spacingAndGlyphs" >8</text>
<line x1="0" y1="338.81" x2="25" y2="338.81" stroke="#2e2e2e" stroke-width="0.8" />
<text x="9.7" y="371.94" font-size="13" fill="#fff" stroke="#fff" stroke-width="0.25" textLength="5.8" lengthAdjust="spacingAndGlyphs" >9</text>
<line x1="0" y1="357.74" x2="25" y2="357.74" stroke="#2e2e2e" stroke-width="0.8" />
<text x="5.85" y="390.87" font-size="13" fill="#fff" stroke="#fff" stroke-width="0.25" textLength="13.5" lengthAdjust="spacingAndGlyphs" >10</text>
<line x1="0" y1="376.67" x2="25" y2="376.67" stroke="#2e2e2e" stroke-width="0.8" />
<text x="5.85" y="409.8" font-size="13" fill="#fff" stroke="#fff" stroke-width="0.25" textLength="13.5" lengthAdjust="spacingAndGlyphs" >11</text>
<line x1="0" y1="395.6" x2="25" y2="395.6" stroke="#2e2e2e" stroke-width="0.8" />
<text x="5.85" y="428.72999999999996" font-size="13" fill="#fff" stroke="#fff" stroke-width="0.25" textLength="13.5" lengthAdjust="spacingAndGlyphs" >12</text>
<line x1="0" y1="414.53" x2="25" y2="414.53" stroke="#2e2e2e" stroke-width="0.8" />
<text x="5.85" y="447.66" font-size="13" fill="#fff" stroke="#fff" stroke-width="0.25" textLength="13.5" lengthAdjust="spacingAndGlyphs" >13</text>
<line x1="0" y1="433.46000000000004" x2="25" y2="433.46000000000004" stroke="#2e2e2e" stroke-width="0.8" />
<line x1="25.5" y1="225.23000000000002" x2="699.5" y2="225.23000000000002" stroke="#e4e4e4" stroke-width="1" />
<line x1="25.5" y1="244.16000000000003" x2="699.5" y2="244.16000000000003" stroke="#e4e4e4" stroke-width="1" />
<line x1="25.5" y1="263.09000000000003" x2="699.5" y2="263.09000000000003" stroke="#e4e4e4" stroke-width="1" />
<line x1="25.5" y1="282.02" x2="699.5" y2="282.02" stroke="#e4e4e4" stroke-width="1" />
<line x1="25.5" y1="300.95000000000005" x2="699.5" y2="300.95000000000005" stroke="#e4e4e4" stroke-width="1" />
<line x1="25.5" y1="319.88" x2="699.5" y2="319.88" stroke="#e4e4e4" stroke-width="1" />
<line x1="25.5" y1="338.81" x2="699.5" y2="338.81" stroke="#e4e4e4" stroke-width="1" />
<line x1="25.5" y1="357.74" x2="699.5" y2="357.74" stroke="#e4e4e4" stroke-width="1" />
<line x1="25.5" y1="376.67" x2="699.5" y2="376.67" stroke="#e4e4e4" stroke-width="1" />
<line x1="25.5" y1="395.6" x2="699.5" y2="395.6" stroke="#e4e4e4" stroke-width="1" />
<line x1="25.5" y1="414.53" x2="699.5" y2="414.53" stroke="#e4e4e4" stroke-width="1" />
<line x1="25.5" y1="433.46000000000004" x2="699.5" y2="433.46000000000004" stroke="#e4e4e4" stroke-width="1" />
<line x1="105" y1="206.3" x2="105" y2="442.2" stroke="#e4e4e4" stroke-width="1" />
<line x1="171.5" y1="206.3" x2="171.5" y2="442.2" stroke="#e4e4e4" stroke-width="1" />
<line x1="236.5" y1="206.3" x2="236.5" y2="442.2" stroke="#e4e4e4" stroke-width="1" />
<line x1="504.5" y1="206.3" x2="504.5" y2="442.2" stroke="#e4e4e4" stroke-width="1" />
<line x1="570.3" y1="206.3" x2="570.3" y2="442.2" stroke="#e4e4e4" stroke-width="1" />
<line x1="635.5" y1="206.3" x2="635.5" y2="442.2" stroke="#e4e4e4" stroke-width="1" />
<rect x="25.5" y="225.23000000000002" width="146" height="18.93" fill="#ed7331" />
<rect x="25.5" y="244.16000000000003" width="146" height="132.51" fill="#84dc9a" />
<line x1="25.5" y1="263.29" x2="170.5" y2="263.29" stroke="#3f6f4e" stroke-width="1" />
<line x1="25.5" y1="282.21999999999997" x2="170.5" y2="282.21999999999997" stroke="#3f6f4e" stroke-width="1" />
<line x1="25.5" y1="301.15000000000003" x2="170.5" y2="301.15000000000003" stroke="#3f6f4e" stroke-width="1" />
<line x1="25.5" y1="320.08" x2="170.5" y2="320.08" stroke="#3f6f4e" stroke-width="1" />
<line x1="25.5" y1="339.01" x2="170.5" y2="339.01" stroke="#3f6f4e" stroke-width="1" />
<line x1="25.5" y1="357.94" x2="170.5" y2="357.94" stroke="#3f6f4e" stroke-width="1" />
<line x1="105.3" y1="244.16000000000003" x2="105.3" y2="376.67" stroke="#24402e" stroke-width="1" />
<rect x="25.5" y="376.67" width="79.5" height="18.93" fill="#e19fdc" />
<rect x="105.5" y="377.17" width="66" height="18.4" fill="#d2d2d2" />
<rect x="25.5" y="243.86" width="146" height="132.81" fill="none" stroke="#5b8def" stroke-width="1" />
<rect x="170" y="242.66000000000003" width="3" height="3" fill="#3f6fe0" />
<rect x="170" y="375.17" width="3" height="3" fill="#3f6fe0" />
<rect x="105.5" y="396.6" width="399" height="17.9" fill="#84c6ea" />
<path d="M105.5 396.1 V414.53 H171.5" stroke="#1f7044" stroke-width="1.4" fill="none" />
<line x1="139.5" y1="396.6" x2="139.5" y2="414.53" stroke="#2b3b35" stroke-width="1" />
<text x="27.5" y="239.83" font-size="13.3" fill="#111" stroke="#111" stroke-width="0.25" textLength="30" lengthAdjust="spacingAndGlyphs" >Array</text>
<text x="108" y="239.83" font-size="13.3" fill="#111" stroke="#111" stroke-width="0.25" textLength="31.5" lengthAdjust="spacingAndGlyphs" >Sales</text>
<text x="27.4" y="258.76000000000005" font-size="13.3" fill="#111" stroke="#111" stroke-width="0.25" textLength="26.7" lengthAdjust="spacingAndGlyphs" >Shirt</text>
<text x="108" y="258.76000000000005" font-size="13.3" fill="#111" stroke="#111" stroke-width="0.25" textLength="21" lengthAdjust="spacingAndGlyphs" >$34</text>
<text x="27.4" y="277.69000000000005" font-size="13.3" fill="#111" stroke="#111" stroke-width="0.25" textLength="32.2" lengthAdjust="spacingAndGlyphs" >Jeans</text>
<text x="108" y="277.69000000000005" font-size="13.3" fill="#111" stroke="#111" stroke-width="0.25" textLength="21" lengthAdjust="spacingAndGlyphs" >$45</text>
<text x="27.4" y="296.62" font-size="13.3" fill="#111" stroke="#111" stroke-width="0.25" textLength="49.7" lengthAdjust="spacingAndGlyphs" >Trousers</text>
<text x="108" y="296.62" font-size="13.3" fill="#111" stroke="#111" stroke-width="0.25" textLength="21" lengthAdjust="spacingAndGlyphs" >$65</text>
<text x="27.4" y="315.55000000000007" font-size="13.3" fill="#111" stroke="#111" stroke-width="0.25" textLength="25.7" lengthAdjust="spacingAndGlyphs" >Skirt</text>
<text x="108" y="315.55000000000007" font-size="13.3" fill="#111" stroke="#111" stroke-width="0.25" textLength="21" lengthAdjust="spacingAndGlyphs" >$23</text>
<text x="27.4" y="334.48" font-size="13.3" fill="#111" stroke="#111" stroke-width="0.25" textLength="67.7" lengthAdjust="spacingAndGlyphs" >SweatShirts</text>
<text x="108" y="334.48" font-size="13.3" fill="#111" stroke="#111" stroke-width="0.25" textLength="21" lengthAdjust="spacingAndGlyphs" >$67</text>
<text x="27.4" y="353.41" font-size="13.3" fill="#111" stroke="#111" stroke-width="0.25" textLength="21.7" lengthAdjust="spacingAndGlyphs" >Top</text>
<text x="108" y="353.41" font-size="13.3" fill="#111" stroke="#111" stroke-width="0.25" textLength="21" lengthAdjust="spacingAndGlyphs" >$34</text>
<text x="27.4" y="372.34000000000003" font-size="13.3" fill="#111" stroke="#111" stroke-width="0.25" textLength="52.7" lengthAdjust="spacingAndGlyphs" >Sweaters</text>
<text x="108" y="372.34000000000003" font-size="13.3" fill="#111" stroke="#111" stroke-width="0.25" textLength="21" lengthAdjust="spacingAndGlyphs" >$61</text>
<text x="27.6" y="391.27000000000004" font-size="13.3" fill="#111" stroke="#111" stroke-width="0.25" textLength="47" lengthAdjust="spacingAndGlyphs" >Formula</text>
<text x="108" y="391.27000000000004" font-size="13.3" fill="#111" stroke="#111" stroke-width="0.25" textLength="506" lengthAdjust="spacingAndGlyphs" >Shirt, $34, Jeans, $45, Trousers, $65, Skirt, $23, SweatShirts, $67, Top, $34, Sweaters, $61</text>
<text x="108.6" y="410.20000000000005" font-size="13.3" fill="#111" stroke="#111" stroke-width="0.25" textLength="141.7" lengthAdjust="spacingAndGlyphs">=ARRAYTOTEXT(<tspan fill="#4a8cec" stroke="#4a8cec">B3:C9</tspan>,1)</text>
<rect x="115.8" y="416.4" width="139" height="14.2" fill="#f3f3f3" rx="3.5" stroke="#a8a8a8" stroke-width="1.1" />
<text x="120.8" y="426.3" font-size="9.7" fill="#222" textLength="128.2" lengthAdjust="spacingAndGlyphs"><tspan font-weight="bold">ARRAYTOTEXT</tspan>(array, [format])</text>
<rect x="99.5" y="394.2" width="173.2" height="41" fill="none" stroke="#ea1c24" stroke-width="2.8" />
<rect x="700" y="187" width="15" height="255.2" fill="#171717" />
<rect x="704.8" y="201" width="6.4" height="131" fill="#9c9c9c" rx="3.2" />
<path d="M704.3 197 l3.7 -5 l3.7 5 z" stroke="#9c9c9c" stroke-width="0" fill="#9c9c9c" />
<path d="M704.3 434.5 l3.7 5 l3.7 -5 z" stroke="#9c9c9c" stroke-width="0" fill="#9c9c9c" />
<rect x="0" y="442.2" width="715.3" height="24.3" fill="#0a0a0a" />
<path d="M21.5 450.5 l-3 3.5 l3 3.5" stroke="#9a9a9a" stroke-width="1" fill="none" stroke-linecap="round" stroke-linejoin="round"/>
<path d="M43.5 450.5 l3 3.5 l-3 3.5" stroke="#9a9a9a" stroke-width="1" fill="none" stroke-linecap="round" stroke-linejoin="round"/>
<text x="90.5" y="459" font-size="10.4" fill="#fff" stroke="#fff" stroke-width="0.25" textLength="32" lengthAdjust="spacingAndGlyphs" >Sheet1</text>
<line x1="129.5" y1="446" x2="129.5" y2="461" stroke="#555" stroke-width="1" />
<path d="M135.5 442 h46 v18 a3.5 3.5 0 0 1 -3.5 3.5 h-39 a3.5 3.5 0 0 1 -3.5 -3.5 z" stroke="none" stroke-width="0" fill="#fff" />
<text x="141.5" y="457.5" font-size="10.4" fill="#111" stroke="#111" stroke-width="0.25" textLength="32.5" lengthAdjust="spacingAndGlyphs" >Sheet2</text>
<line x1="141.5" y1="460.8" x2="174" y2="460.8" stroke="#1e8f4e" stroke-width="1.3" />
<line x1="185" y1="446" x2="185" y2="461" stroke="#555" stroke-width="1" />
<path d="M216 454 h8 M220 450 v8" stroke="#bdbdbd" stroke-width="1" fill="none" />
<rect x="431.3" y="449.9" width="1.2" height="1.2" fill="#d0d0d0" />
<rect x="431.3" y="452.9" width="1.2" height="1.2" fill="#d0d0d0" />
<rect x="431.3" y="455.9" width="1.2" height="1.2" fill="#d0d0d0" />
<rect x="442.5" y="447.2" width="260" height="13.5" fill="#161616" rx="6.7" />
<path d="M452.5 450.5 l-4.5 3.2 l4.5 3.2 z" stroke="#9c9c9c" stroke-width="0" fill="#9c9c9c" />
<path d="M692 450.5 l4.5 3.2 l-4.5 3.2 z" stroke="#9c9c9c" stroke-width="0" fill="#9c9c9c" />
<rect x="477.5" y="450.6" width="190" height="6.4" fill="#a6a6a6" rx="3.2" />
<rect x="0" y="466.3" width="715.3" height="8" fill="#131313" />
<line x1="0" y1="467.2" x2="715.3" y2="467.2" stroke="#2c2c2c" stroke-width="1" />
<line x1="0" y1="472.3" x2="715.3" y2="472.3" stroke="#242424" stroke-width="0.8" />
<rect x="490" y="471.5" width="9" height="2.5" fill="none" stroke="#8a8a8a" stroke-width="0.8" />
<rect x="522" y="471.5" width="9" height="2.5" fill="none" stroke="#8a8a8a" stroke-width="0.8" />
<rect x="553" y="471.5" width="9" height="2.5" fill="none" stroke="#8a8a8a" stroke-width="0.8" />
<rect x="44" y="471" width="11" height="3" fill="#ccc" />
<path d="M70.5 474 l2.5 -3 l2.5 3" stroke="#bbb" stroke-width="0.9" fill="none" />
</svg>
</body></html>
